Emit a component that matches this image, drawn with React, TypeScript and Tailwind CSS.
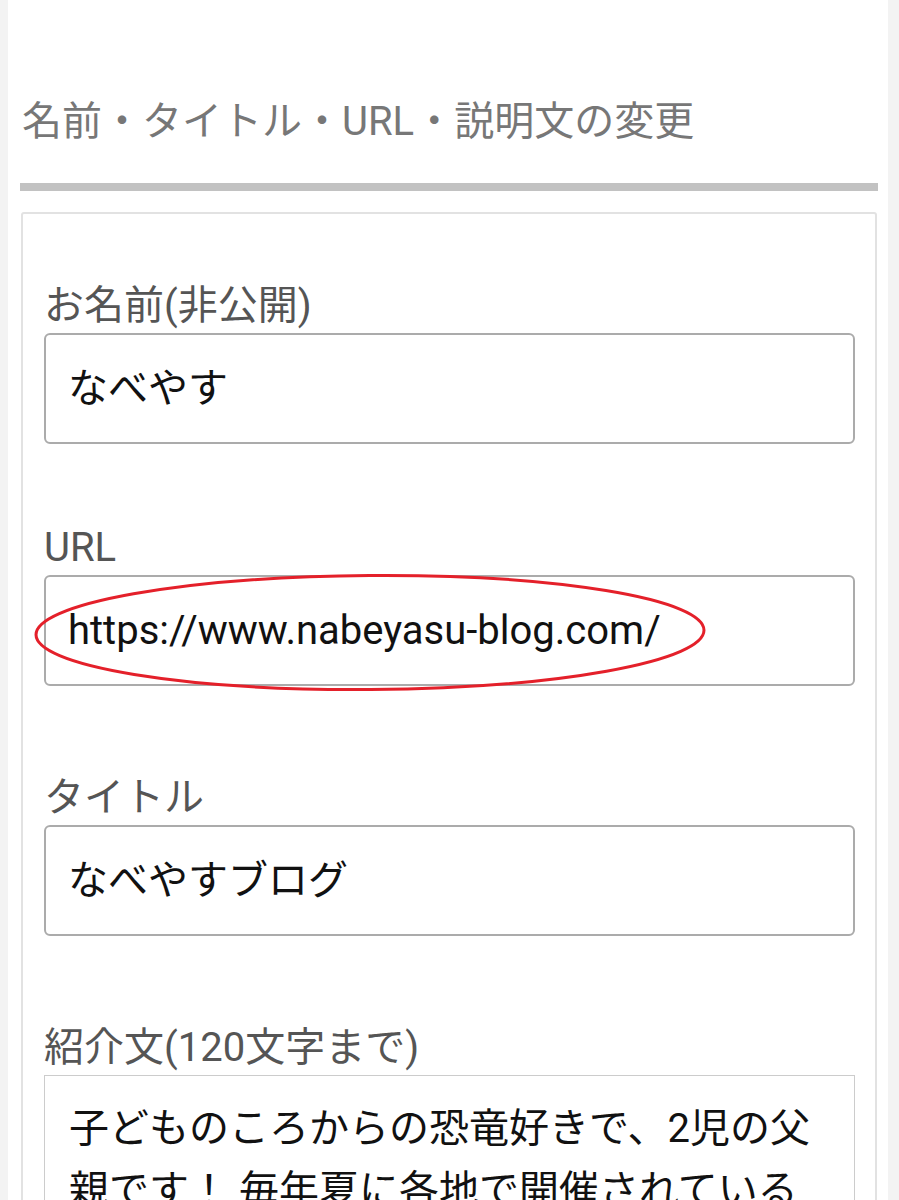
export default function App() {
  const font = { fontFamily: 'Roboto, "Noto Sans CJK JP", sans-serif' };

  return (
    <div className="min-h-screen bg-[#f3f3f3] pl-[8px] pr-[11px]" style={font}>
      <div className="min-h-[1200px] bg-white pt-[98px]">
        <h2 className="pl-[14px] text-[40px] leading-[48px] text-[#777777]">
          名前・タイトル・URL・説明文の変更
        </h2>

        <div className="ml-[12px] mr-[10px] mt-[37px] h-[8px] bg-[#c2c2c2]" />

        <div className="ml-[13px] mr-[11px] mt-[21px] rounded-[3px] border-2 border-[#e2e2e2] pl-[21px] pr-[20px] pt-[68px]">
          <Field label="お名前(非公開)" gap="mb-[80px]">
            <Box>なべやす</Box>
          </Field>

          <Field label="URL" gap="mb-[88px]">
            <div className="relative">
              <Box>https://www.nabeyasu-blog.com/</Box>
              <svg
                className="pointer-events-none absolute -left-[10px] -top-[1px] overflow-visible"
                width="672"
                height="117"
                viewBox="0 0 672 117"
              >
                <ellipse
                  cx="336"
                  cy="58.5"
                  rx="334"
                  ry="57"
                  fill="none"
                  stroke="#e4202a"
                  strokeWidth="3"
                  transform="rotate(-0.4 336 58.5)"
                />
              </svg>
            </div>
          </Field>

          <Field label="タイトル" gap="mb-[88px]">
            <Box>なべやすブログ</Box>
          </Field>

          <div>
            <p className="text-[40px] leading-[48px] text-[#555555]">紹介文(120文字まで)</p>
            <div className="mt-[3px] h-[200px] overflow-hidden border border-[#cccccc] pl-[24px] pr-[20px] pt-[22px] text-[40px] leading-[62px] text-[#111111]">
              <span className="block whitespace-nowrap">子どものころからの恐竜好きで、2児の父</span>
              <span className="block whitespace-nowrap">親です！ 毎年夏に各地で開催されている</span>
              <span className="block whitespace-nowrap">恐竜博に家族で出かけています。</span>
            </div>
          </div>
        </div>
      </div>
    </div>
  );
}

function Field({
  label,
  gap,
  children,
}: {
  label: string;
  gap: string;
  children: React.ReactNode;
}) {
  return (
    <div className={gap}>
      <p className="text-[40px] leading-[48px] text-[#555555]">{label}</p>
      <div className="mt-[3px]">{children}</div>
    </div>
  );
}

function Box({ children }: { children: React.ReactNode }) {
  return (
    <div className="flex h-[111px] items-center rounded-[6px] border-2 border-[#ababab] pl-[22px] text-[40px] text-[#111111]">
      {children}
    </div>
  );
}
